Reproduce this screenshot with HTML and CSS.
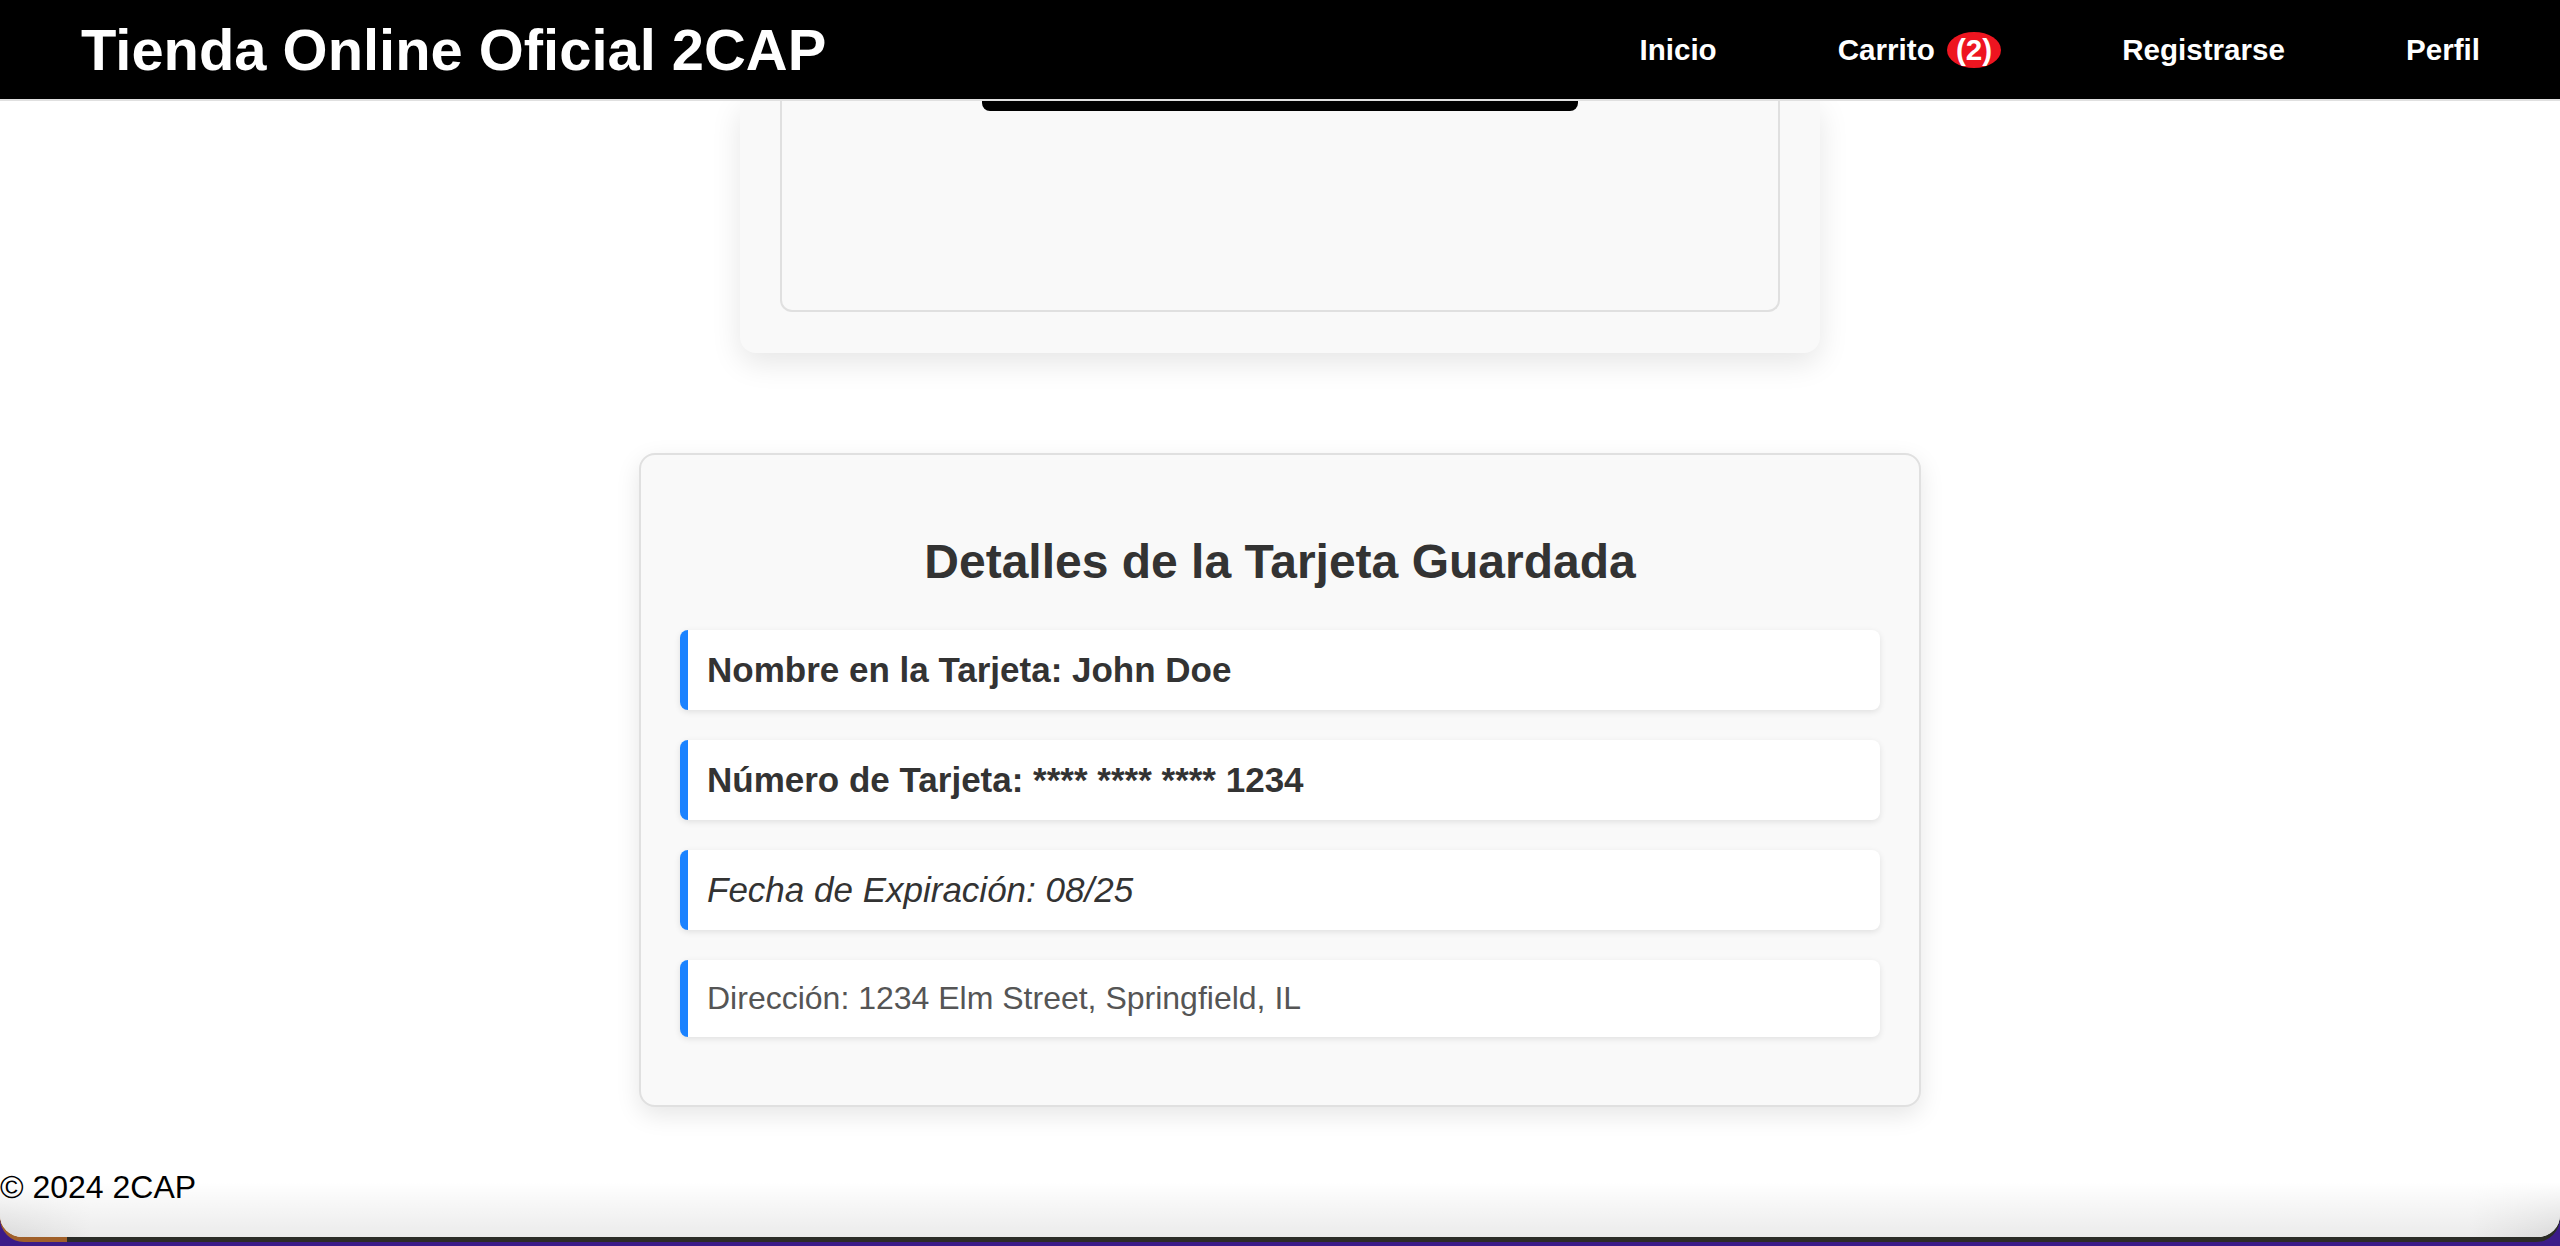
FILE: index.html
```html
<!DOCTYPE html>
<html lang="es">
<head>
<meta charset="utf-8">
<title>Tienda Online Oficial 2CAP</title>
<link rel="stylesheet" href="styles.css">
</head>
<body>
<div class="frame">
  <div class="window">
    <header class="topbar">
      <h1 class="brand">Tienda Online Oficial 2CAP</h1>
      <nav class="nav">
        <a href="#">Inicio</a>
        <a href="#">Carrito <span class="badge">(2)</span></a>
        <a href="#">Registrarse</a>
        <a href="#">Perfil</a>
      </nav>
    </header>
    <main class="content">
      <section class="panel">
        <div class="panel-inner">
          <div class="black-bar"></div>
        </div>
      </section>
      <section class="card">
        <h2 class="card-title">Detalles de la Tarjeta Guardada</h2>
        <p class="item item--bold">Nombre en la Tarjeta: John Doe</p>
        <p class="item item--bold">Número de Tarjeta: **** **** **** 1234</p>
        <p class="item item--italic">Fecha de Expiración: 08/25</p>
        <p class="item item--muted">Dirección: 1234 Elm Street, Springfield, IL</p>
      </section>
    </main>
    <footer class="footer">© 2024 2CAP</footer>
  </div>
</div>
</body>
</html>
```
FILE: styles.css
```css
html {
  background: #3b1b88;
}
body {
  margin: 0;
  font-family: "Liberation Sans", Arial, sans-serif;
}
.frame {
  height: 1242px;
  box-sizing: border-box;
  padding-bottom: 5px;
  background: linear-gradient(to right, #a0602a 0, #a0602a 67px, #2b2c27 67px);
  border-radius: 0 0 24px 24px;
}
.window {
  height: 1237px;
  background: #fff;
  border-radius: 0 0 22px 22px;
  display: flex;
  flex-direction: column;
  overflow: hidden;
}
.topbar {
  position: relative;
  z-index: 2;
  flex-shrink: 0;
  height: 99px;
  background: #000;
  border-bottom: 2px solid #e0e0e0;
  display: flex;
  align-items: center;
  justify-content: space-between;
  padding: 0 80px 0 81px;
}
.brand {
  margin: 0;
  font-size: 57.9px;
  font-weight: bold;
  color: #fff;
}
.nav {
  display: flex;
  align-items: center;
  gap: 121px;
}
.nav a {
  color: #fff;
  text-decoration: none;
  font-weight: bold;
  font-size: 29.6px;
}
.badge {
  display: inline-block;
  background: #ee1520;
  color: #fff;
  border-radius: 50%;
  padding: 1px 9px;
  margin-left: 4px;
}
.content {
  position: relative;
  z-index: 1;
  display: flex;
  flex-direction: column;
  align-items: center;
  flex-shrink: 0;
}
.panel {
  width: 1080px;
  box-sizing: border-box;
  background: #f9f9f9;
  padding: 0 40px 41px;
  border-radius: 0 0 16px 16px;
  box-shadow: 0 10px 30px rgba(0, 0, 0, 0.1);
  margin-bottom: 100px;
}
.panel-inner {
  height: 209px;
  border: 2px solid #e0e0e0;
  border-top: none;
  border-radius: 0 0 12px 12px;
  background: #f9f9f9;
  display: flex;
  justify-content: center;
  align-items: flex-start;
}
.black-bar {
  width: 596px;
  height: 10px;
  background: #000;
  border-radius: 0 0 8px 8px;
}
.card {
  width: 1282px;
  box-sizing: border-box;
  border: 2px solid #e0e0e0;
  border-radius: 16px;
  background: #f9f9f9;
  padding: 40px 39px 38px;
  box-shadow: 0 8px 24px rgba(0, 0, 0, 0.1);
}
.card-title {
  margin: 39px 0 41px;
  text-align: center;
  font-size: 48px;
  font-weight: bold;
  color: #333;
}
.item {
  margin: 0 0 30px;
  padding: 20px 19px;
  background: #fff;
  border-left: 8px solid #1a82ff;
  border-radius: 8px;
  box-shadow: 0 2px 6px rgba(0, 0, 0, 0.1);
  font-size: 35px;
  color: #333;
}
.item--bold {
  font-weight: bold;
}
.item--italic {
  font-style: italic;
}
.item--muted {
  font-size: 32px;
  color: #555;
}
.footer {
  flex: 1;
  padding-top: 62px;
  font-size: 32px;
  color: #000;
  background:
    linear-gradient(to bottom, #fff 0, #fff 58%, rgba(255, 255, 255, 0) 100%),
    linear-gradient(to right, #d9d9d9 0, #ebebeb 90px, #ebebeb calc(100% - 90px), #d9d9d9 100%);
}
```
